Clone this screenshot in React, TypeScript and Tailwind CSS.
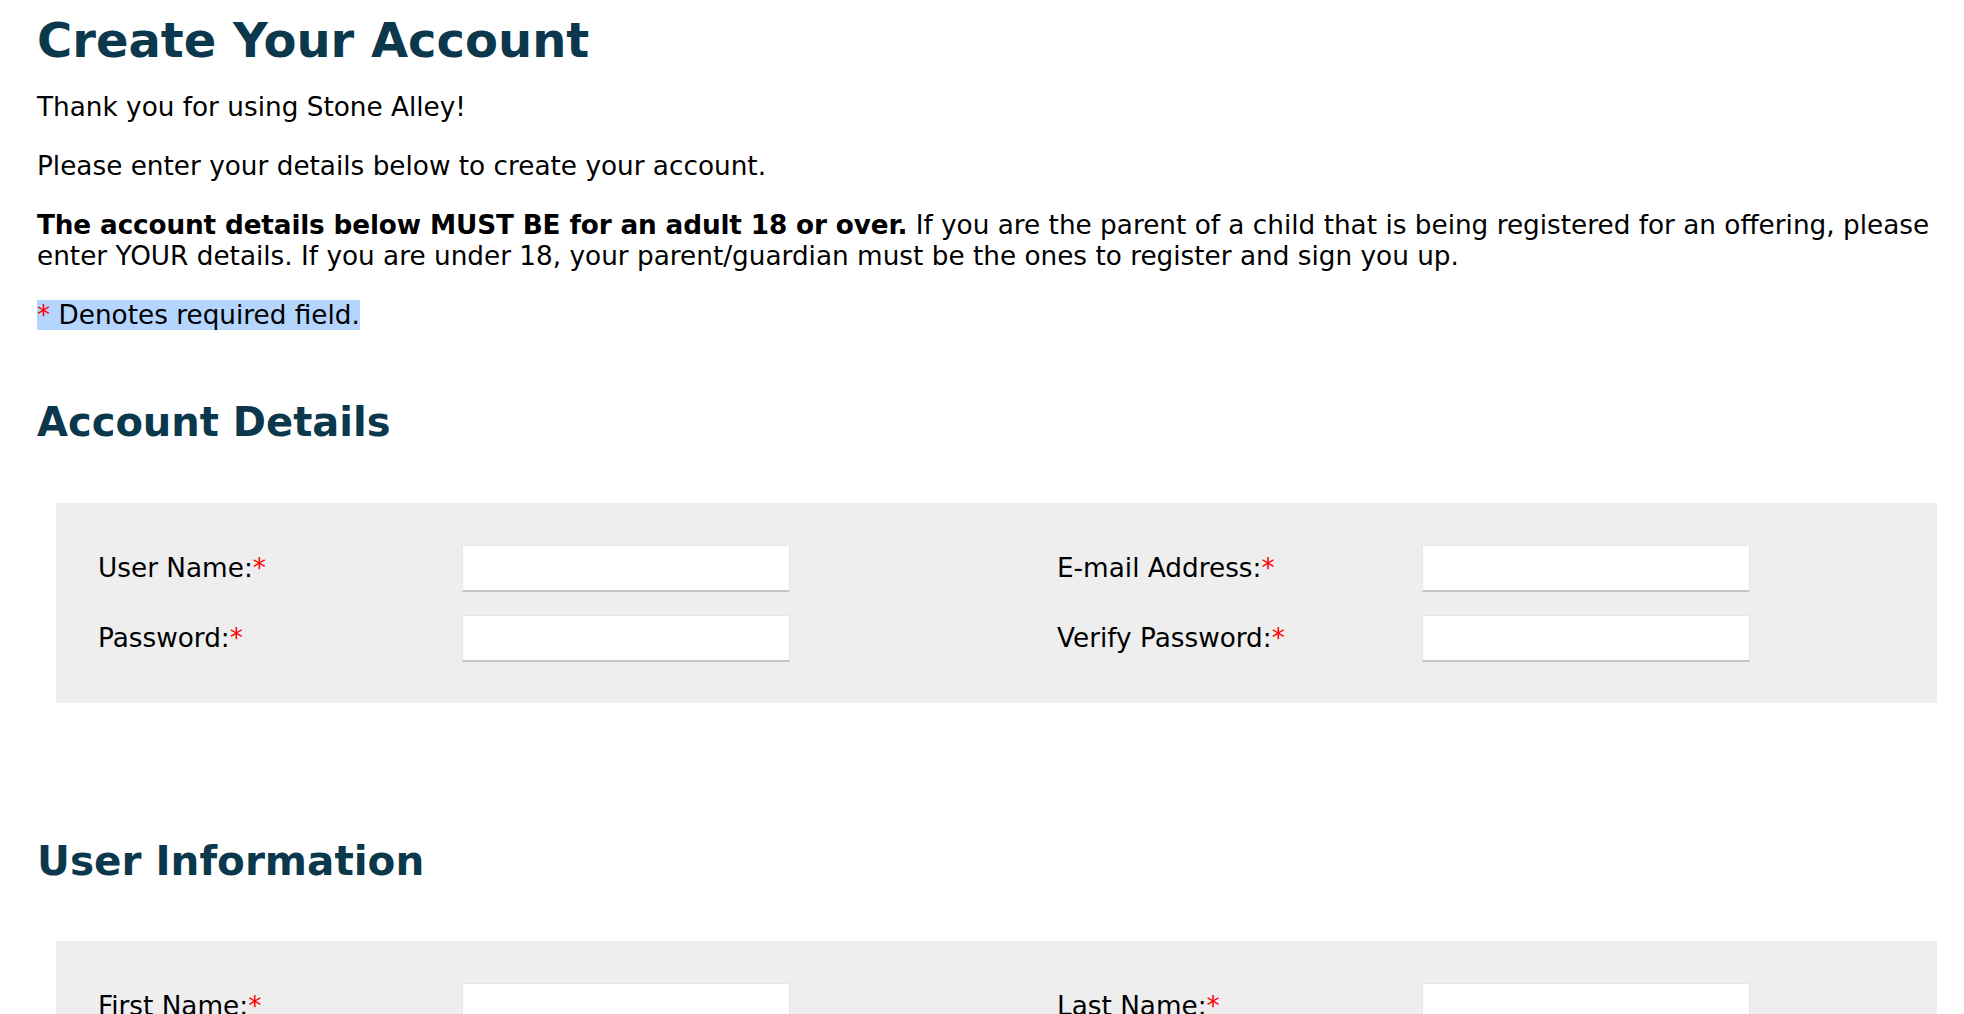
import React from 'react';

type Field = { label: string; type?: string };

function Req() {
  return <span className="text-[#ff0000]">*</span>;
}

function FieldRow({ left, right }: { left: Field; right: Field }) {
  return (
    <>
      <label className="flex items-center">
        {left.label}
        <Req />
      </label>
      <input
        type={left.type ?? 'text'}
        className="h-[47px] w-[328px] bg-white border border-[#e6e6e6] border-b-2 border-b-[#c6c6c6] outline-none"
      />
      <div />
      <label className="flex items-center">
        {right.label}
        <Req />
      </label>
      <input
        type={right.type ?? 'text'}
        className="h-[47px] w-[328px] bg-white border border-[#e6e6e6] border-b-2 border-b-[#c6c6c6] outline-none"
      />
    </>
  );
}

function FormBox({ rows }: { rows: [Field, Field][] }) {
  return (
    <div className="ml-[19px] bg-[#eeeeee] pt-[42px] pb-[41px] pl-[42px]">
      <div className="grid grid-cols-[364px_328px_267px_365px_328px] gap-y-[23px] items-center">
        {rows.map(([l, r]) => (
          <FieldRow key={l.label} left={l} right={r} />
        ))}
      </div>
    </div>
  );
}

export default function App() {
  return (
    <div
      className="min-h-screen bg-white text-black pt-[12px] pl-[37px] pr-[27px]"
      style={{ fontFamily: '"DejaVu Sans", Verdana, sans-serif' }}
    >
      <div className="flex flex-col text-[26.3px] leading-[31px]">
        <h1 className="text-[48px] leading-[57px] font-bold text-[#0b384c] mb-[23px]">
          Create Your Account
        </h1>
        <p className="mb-[28px]">Thank you for using Stone Alley!</p>
        <p className="mb-[28px]">Please enter your details below to create your account.</p>
        <p className="mb-[28px]">
          <b className="tracking-[-0.15px]">The account details below MUST BE for an adult 18 or over.</b> If you are the parent of a child that is being registered for an offering, please enter YOUR details. If you are under 18, your parent/guardian must be the ones to register and sign you up.
        </p>
        <p>
          <span className="bg-[#b4d5fe]">
            <Req /> Denotes required field.
          </span>
        </p>

        <h2 className="mt-[67px] mb-[57px] text-[40px] leading-[48px] font-bold text-[#0b384c]">
          Account Details
        </h2>
        <FormBox
          rows={[
            [{ label: 'User Name:' }, { label: 'E-mail Address:', type: 'email' }],
            [{ label: 'Password:', type: 'password' }, { label: 'Verify Password:', type: 'password' }],
          ]}
        />

        <h2 className="mt-[134px] mb-[56px] text-[40.5px] leading-[48px] font-bold text-[#0b384c]">
          User Information
        </h2>
        <FormBox
          rows={[
            [{ label: 'First Name:' }, { label: 'Last Name:' }],
            [{ label: 'Address:' }, { label: 'City:' }],
          ]}
        />
      </div>
    </div>
  );
}
